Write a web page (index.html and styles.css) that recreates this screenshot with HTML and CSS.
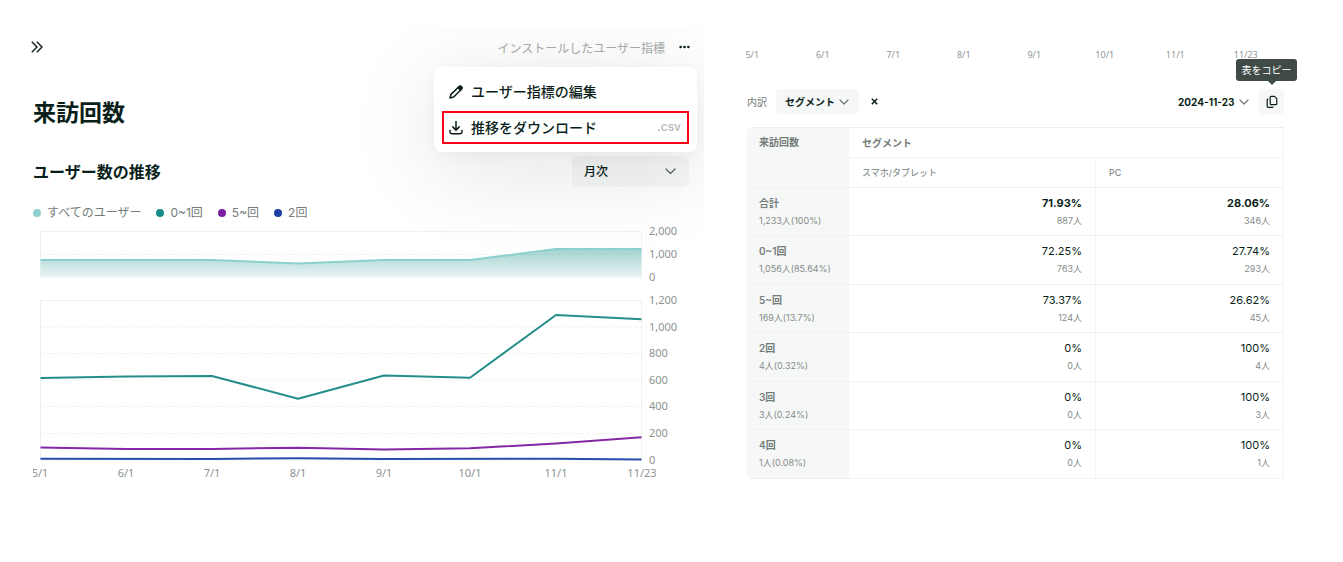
FILE: index.html
```html
<!DOCTYPE html>
<html lang="ja">
<head>
<meta charset="utf-8">
<meta name="viewport" content="width=device-width, initial-scale=1">
<title>来訪回数</title>
<link rel="stylesheet" href="styles.css">
</head>
<body>
<main class="page">
  <section class="trend">
    <header class="topbar">
      <button class="icon-btn expand" type="button" aria-label="開く">
        <svg width="12" height="12" viewBox="0 0 12 12"><path d="M0.8 0.8 6 6 0.8 11.2M5.8 0.8 11 6 5.8 11.2"/></svg>
      </button>
      <span class="metric-name">インストールしたユーザー指標</span>
      <button class="icon-btn more" type="button" aria-label="メニュー">
        <svg width="11" height="4" viewBox="0 0 11 4"><circle cx="1.6" cy="2" r="1.3"/><circle cx="5.5" cy="2" r="1.3"/><circle cx="9.4" cy="2" r="1.3"/></svg>
      </button>
      <div class="menu">
        <button class="menu-item" type="button">
          <svg class="menu-icon" width="16" height="16" viewBox="0 0 16 16"><path d="M2 14 3 10.400 10.600 3a1.700 1.700 0 0 1 2.600 2.500L5.700 13Z"/><path class="solid" d="m10 3.600 1.200-1.100a1.700 1.700 0 0 1 2.400 2.400l-1.200 1.300Z"/></svg>
          <span>ユーザー指標の編集</span>
        </button>
        <button class="menu-item selected" type="button">
          <svg class="menu-icon" width="16" height="16" viewBox="0 0 16 16"><path d="M8 1.500v8.400M4.800 6.900 8 10.100l3.200-3.200M2 10.500v1.600a1.700 1.700 0 0 0 1.700 1.700h8.600a1.700 1.700 0 0 0 1.700-1.700v-1.600"/></svg>
          <span>推移をダウンロード</span>
          <span class="ext">.csv</span>
        </button>
      </div>
    </header>

    <h1 class="title">来訪回数</h1>

    <div class="section-head">
      <h2 class="subtitle">ユーザー数の推移</h2>
      <label class="picker period">
        <select aria-label="期間"><option>月次</option></select>
        <svg width="11" height="7" viewBox="0 0 11 7"><path d="m1 1 4.500 4.500L10 1"/></svg>
      </label>
    </div>

    <ul class="legend">
      <li class="all">すべてのユーザー</li>
      <li class="few">0~1回</li>
      <li class="many">5~回</li>
      <li class="two">2回</li>
    </ul>

    <svg class="chart" viewBox="33 220 656 262" role="img" aria-label="ユーザー数の推移">
      <defs>
        <linearGradient id="fade" gradientUnits="userSpaceOnUse" x1="0" y1="249" x2="0" y2="277">
          <stop offset="0" stop-color="#a3d3d1"/><stop offset="1" stop-color="#e8f4f3"/>
        </linearGradient>
      </defs>
      <path class="frame" d="M40.5 277V231.5H641.5V277M40.5 460V300.5H641.5V460"/>
      <path class="area" d="M40.5 260H212L298 263.5 384 260H470L556 249H641.5V277H40.5Z"/>
      <path class="grid" d="M40.5 254.5H641.5M40.5 277.5H641.5M40.5 327H641.5M40.5 353.5H641.5M40.5 380H641.5M40.5 406.5H641.5M40.5 433.5H641.5M40.5 460H641.5"/>
      <path class="line all" d="M40.5 260H212L298 263.5 384 260H470L556 249H641.5"/>
      <path class="line few" d="M40.5 378 126 376.5 212 376 298 398.7 384 375.5 470 377.8 556 315 641.5 319.3"/>
      <path class="line many" d="M40.5 447.5 126 449H212L298 447.7 384 449.5 470 448.3 556 443.5 641.5 437.3"/>
      <path class="line two" d="M40.5 458.8 212 459 298 458.2 384 459 556 458.7 641.5 459.5"/>
      <g class="axis">
        <text x="649" y="235">2,000</text><text x="649" y="258">1,000</text><text x="649" y="281">0</text>
        <text x="649" y="304">1,200</text><text x="649" y="331">1,000</text><text x="649" y="357">800</text>
        <text x="649" y="384">600</text><text x="649" y="410">400</text><text x="649" y="437">200</text><text x="649" y="464">0</text>
      </g>
      <g class="axis dates">
        <text x="40" y="477">5/1</text><text x="126" y="477">6/1</text><text x="212" y="477">7/1</text><text x="298" y="477">8/1</text>
        <text x="384" y="477">9/1</text><text x="470" y="477">10/1</text><text x="556" y="477">11/1</text><text x="642" y="477">11/23</text>
      </g>
    </svg>
  </section>

  <section class="breakdown">
    <div class="date-row">
      <span>5/1</span><span>6/1</span><span>7/1</span><span>8/1</span><span>9/1</span><span>10/1</span><span>11/1</span><span>11/23</span>
    </div>
    <div class="toolbar">
      <label class="field-name" for="segment">内訳</label>
      <span class="picker segment">
        <select id="segment"><option>セグメント</option></select>
        <svg width="10" height="6" viewBox="0 0 10 6"><path d="m1 1 4 4 4-4"/></svg>
      </span>
      <button class="icon-btn clear" type="button" aria-label="解除">
        <svg width="7" height="7" viewBox="0 0 7 7"><path d="m0.8 0.8 5.4 5.4M6.2 0.8 0.8 6.2"/></svg>
      </button>
      <span class="picker date">
        <select aria-label="日付"><option>2024-11-23</option></select>
        <svg width="10" height="6" viewBox="0 0 10 6"><path d="m1 1 4 4 4-4"/></svg>
      </span>
      <div class="copy-wrap">
        <button class="icon-btn copy" type="button" aria-describedby="copy-tip" aria-label="コピー">
          <svg width="12" height="14" viewBox="0 0 12 14"><path d="M5.2 1.3h3.3l2.3 2.3v5.1a1 1 0 0 1-1 1H5.2a1 1 0 0 1-1-1V2.3a1 1 0 0 1 1-1ZM2.5 4H2.2a1 1 0 0 0-1 1v6.3a1 1 0 0 0 1 1h4.2a1 1 0 0 0 1-.7"/></svg>
        </button>
        <span class="tooltip" id="copy-tip" role="tooltip">表をコピー</span>
      </div>
    </div>

    <table class="table">
      <colgroup><col class="col-name"><col class="col-mobile"><col class="col-pc"></colgroup>
      <thead>
        <tr><th class="corner" rowspan="2">来訪回数</th><th class="group" colspan="2">セグメント</th></tr>
        <tr><th class="device">スマホ/タブレット</th><th class="device">PC</th></tr>
      </thead>
      <tbody>
        <tr class="total"><th>合計<small>1,233人(100%)</small></th><td>71.93%<small>887人</small></td><td>28.06%<small>346人</small></td></tr>
        <tr><th>0~1回<small>1,056人(85.64%)</small></th><td>72.25%<small>763人</small></td><td>27.74%<small>293人</small></td></tr>
        <tr><th>5~回<small>169人(13.7%)</small></th><td>73.37%<small>124人</small></td><td>26.62%<small>45人</small></td></tr>
        <tr><th>2回<small>4人(0.32%)</small></th><td>0%<small>0人</small></td><td>100%<small>4人</small></td></tr>
        <tr><th>3回<small>3人(0.24%)</small></th><td>0%<small>0人</small></td><td>100%<small>3人</small></td></tr>
        <tr><th>4回<small>1人(0.08%)</small></th><td>0%<small>0人</small></td><td>100%<small>1人</small></td></tr>
      </tbody>
    </table>
  </section>
</main>
</body>
</html>
```

FILE: styles.css
```css
* { box-sizing: border-box; }

body {
  margin: 0;
  background: #fff;
  color: #0b1f1a;
  font-family: Inter, "Noto Sans CJK JP", sans-serif;
}

button, select { font: inherit; color: inherit; border: 0; margin: 0; }
h1, h2, ul { margin: 0; padding: 0; }
svg { display: block; flex: none; fill: none; stroke: currentColor; }

.page {
  display: grid;
  grid-template-columns: 704fr 639fr;
  padding-top: 27px;
}

/* trend panel */
.trend {
  min-width: 0;
  overflow: hidden;
  padding: 0 15px 16px 33px;
}

.topbar {
  position: relative;
  display: flex;
  align-items: center;
  height: 40px;
  margin: 0 -1px 0 -2px;
}

.icon-btn {
  display: flex;
  align-items: center;
  justify-content: center;
  padding: 0;
  background: none;
}

.expand svg { stroke-width: 1.4; }
.more svg { fill: currentColor; stroke: none; }
.more { width: 11px; height: 20px; margin-left: 14px; }

.metric-name {
  margin-left: auto;
  font-size: 12px;
  color: #a8acab;
}

.menu {
  position: absolute;
  z-index: 2;
  top: 40px;
  right: -7px;
  width: 263px;
  display: flex;
  flex-direction: column;
  gap: 3px;
  padding: 8px;
  border-radius: 8px;
  background: #fff;
  box-shadow: 0 4px 16px rgba(5, 25, 20, .03), 0 16px 90px rgba(5, 15, 12, .12);
}

.menu-item {
  display: flex;
  align-items: center;
  gap: 7px;
  height: 33px;
  padding: 0 6px 0 4px;
  border: 2px solid transparent;
  background: none;
  font-size: 14px;
  font-weight: 500;
}

.menu-item span { padding-bottom: 2px; }
.menu-item.selected { border-color: #fb0019; }
.menu-icon { stroke-width: 1.5; stroke-linecap: round; stroke-linejoin: round; }
.menu-icon .solid { fill: currentColor; }

.menu-item .ext {
  margin-left: auto;
  font-size: 12px;
  color: #b3b7b6;
}

.title {
  margin-top: 30px;
  font-size: 23px;
  line-height: 32px;
  font-weight: 700;
}

.section-head {
  display: flex;
  align-items: center;
  justify-content: space-between;
  margin-top: 27px;
}

.subtitle { font-size: 16px; line-height: 24px; font-weight: 700; }

.picker { position: relative; display: flex; align-items: center; }

.picker select {
  appearance: none;
  width: 100%;
  height: 100%;
  border-radius: 4px;
  background: #f6f7f7;
}

.picker svg {
  position: absolute;
  right: 11px;
  color: #6f7775;
  stroke-width: 1.5;
  stroke-linecap: round;
  stroke-linejoin: round;
  pointer-events: none;
}

.period { width: 117px; height: 31px; }
.period select { padding: 0 12px; border-radius: 6px; font-size: 12px; font-weight: 500; }
.period svg { right: 13px; }

.legend {
  display: flex;
  gap: 15px;
  margin-top: 18px;
  list-style: none;
  font-size: 12px;
  line-height: 16px;
  color: #747c7a;
}

.legend li { display: flex; align-items: center; gap: 6px; }
.legend li::before { content: ""; width: 8px; height: 8px; border-radius: 50%; background: currentColor; }
.legend .all::before { background: #8bd0cd; }
.legend .few::before { background: #178a86; }
.legend .many::before { background: #7b1fa2; }
.legend .two::before { background: #1e3fa5; }

.chart { width: 100%; height: auto; margin-top: -1px; }
.chart .frame { stroke: #eff1f1; }
.chart .grid { stroke: #0b1f1a; stroke-opacity: .06; stroke-dasharray: 4 2; }
.chart .area { fill: url(#fade); stroke: none; }
.chart .line { stroke-width: 2; stroke-linejoin: round; }
.chart .line.all { stroke: #8bd0cd; }
.chart .line.few { stroke: #248e8a; }
.chart .line.many { stroke: #8427a8; }
.chart .line.two { stroke: #2a4cb0; }

.axis {
  fill: #8d9391;
  stroke: none;
  font-family: "Noto Sans", sans-serif;
  font-size: 11px;
}

.dates { text-anchor: middle; }

/* breakdown panel */
.breakdown {
  min-width: 0;
  padding: 20px 59px 24px 43px;
}

.date-row {
  display: grid;
  grid-template-columns: repeat(8, 1fr);
  margin: 0 3px 0 -30px;
  text-align: center;
  font-family: "Noto Sans", sans-serif;
  font-size: 9px;
  line-height: 16px;
  color: #8f9593;
}

.toolbar {
  display: flex;
  align-items: center;
  height: 25px;
  margin-top: 26px;
  font-size: 10px;
}

.field-name { color: #747c7a; }
.segment { width: 83px; height: 25px; margin-left: 9px; }
.segment select { padding: 0 9px; font-weight: 600; }
.clear { width: 15px; height: 15px; margin-left: 8px; }
.clear svg { stroke-width: 1.6; }
.date { width: 91px; height: 25px; margin-left: auto; }
.date select { padding: 0 10px; background: none; font-weight: 700; }
.segment svg, .date svg { right: 10px; stroke-width: 1.2; }
.copy-wrap { position: relative; }

.copy {
  width: 25px;
  height: 25px;
  border-radius: 4px;
  background: #f6f7f7;
}

.copy svg { stroke-width: 1.2; stroke-linejoin: round; }

.tooltip {
  position: absolute;
  right: -13px;
  bottom: 33px;
  width: 61px;
  border-radius: 3px;
  background: #404a47;
  color: #fff;
  text-align: center;
  white-space: nowrap;
  font-size: 10px;
  line-height: 22px;
}

.tooltip::after {
  content: "";
  position: absolute;
  top: 100%;
  right: 21px;
  border: 4px solid transparent;
  border-top-color: #404a47;
  border-bottom: 0;
}

.table {
  width: 100%;
  margin-top: 13px;
  table-layout: fixed;
  border-spacing: 0;
  border-top: 1px solid #ecefee;
  border-radius: 6px 0 0 6px;
  overflow: hidden;
  font-size: 11px;
}

.col-name { width: 19%; }
.col-mobile { width: 46%; }
.col-pc { width: 35%; }

.table th, .table td {
  padding: 0 13px;
  border-right: 1px solid #f3f5f4;
  border-bottom: 1px solid #f1f3f2;
  line-height: 18px;
}

.table th { text-align: left; font-size: 10px; font-weight: 600; color: #747c7a; }
.table td { text-align: right; vertical-align: middle; }
.table .group { height: 30px; }
.table .device { height: 30px; font-size: 9px; font-weight: 400; }
.table .corner, .table tbody th {
  padding-left: 12px;
  background: #f6f8f7;
  border-right: 0;
  border-bottom-color: #eef1f0;
}
.table .corner { padding-top: 5px; vertical-align: top; }
.table tbody th, .table tbody td { height: 48px; }
.table tbody tr:nth-child(even) > * { height: 49px; }
.table .total td { font-weight: 700; }

.table small {
  display: block;
  font-size: 9px;
  font-weight: 400;
  color: #858b89;
}
```
